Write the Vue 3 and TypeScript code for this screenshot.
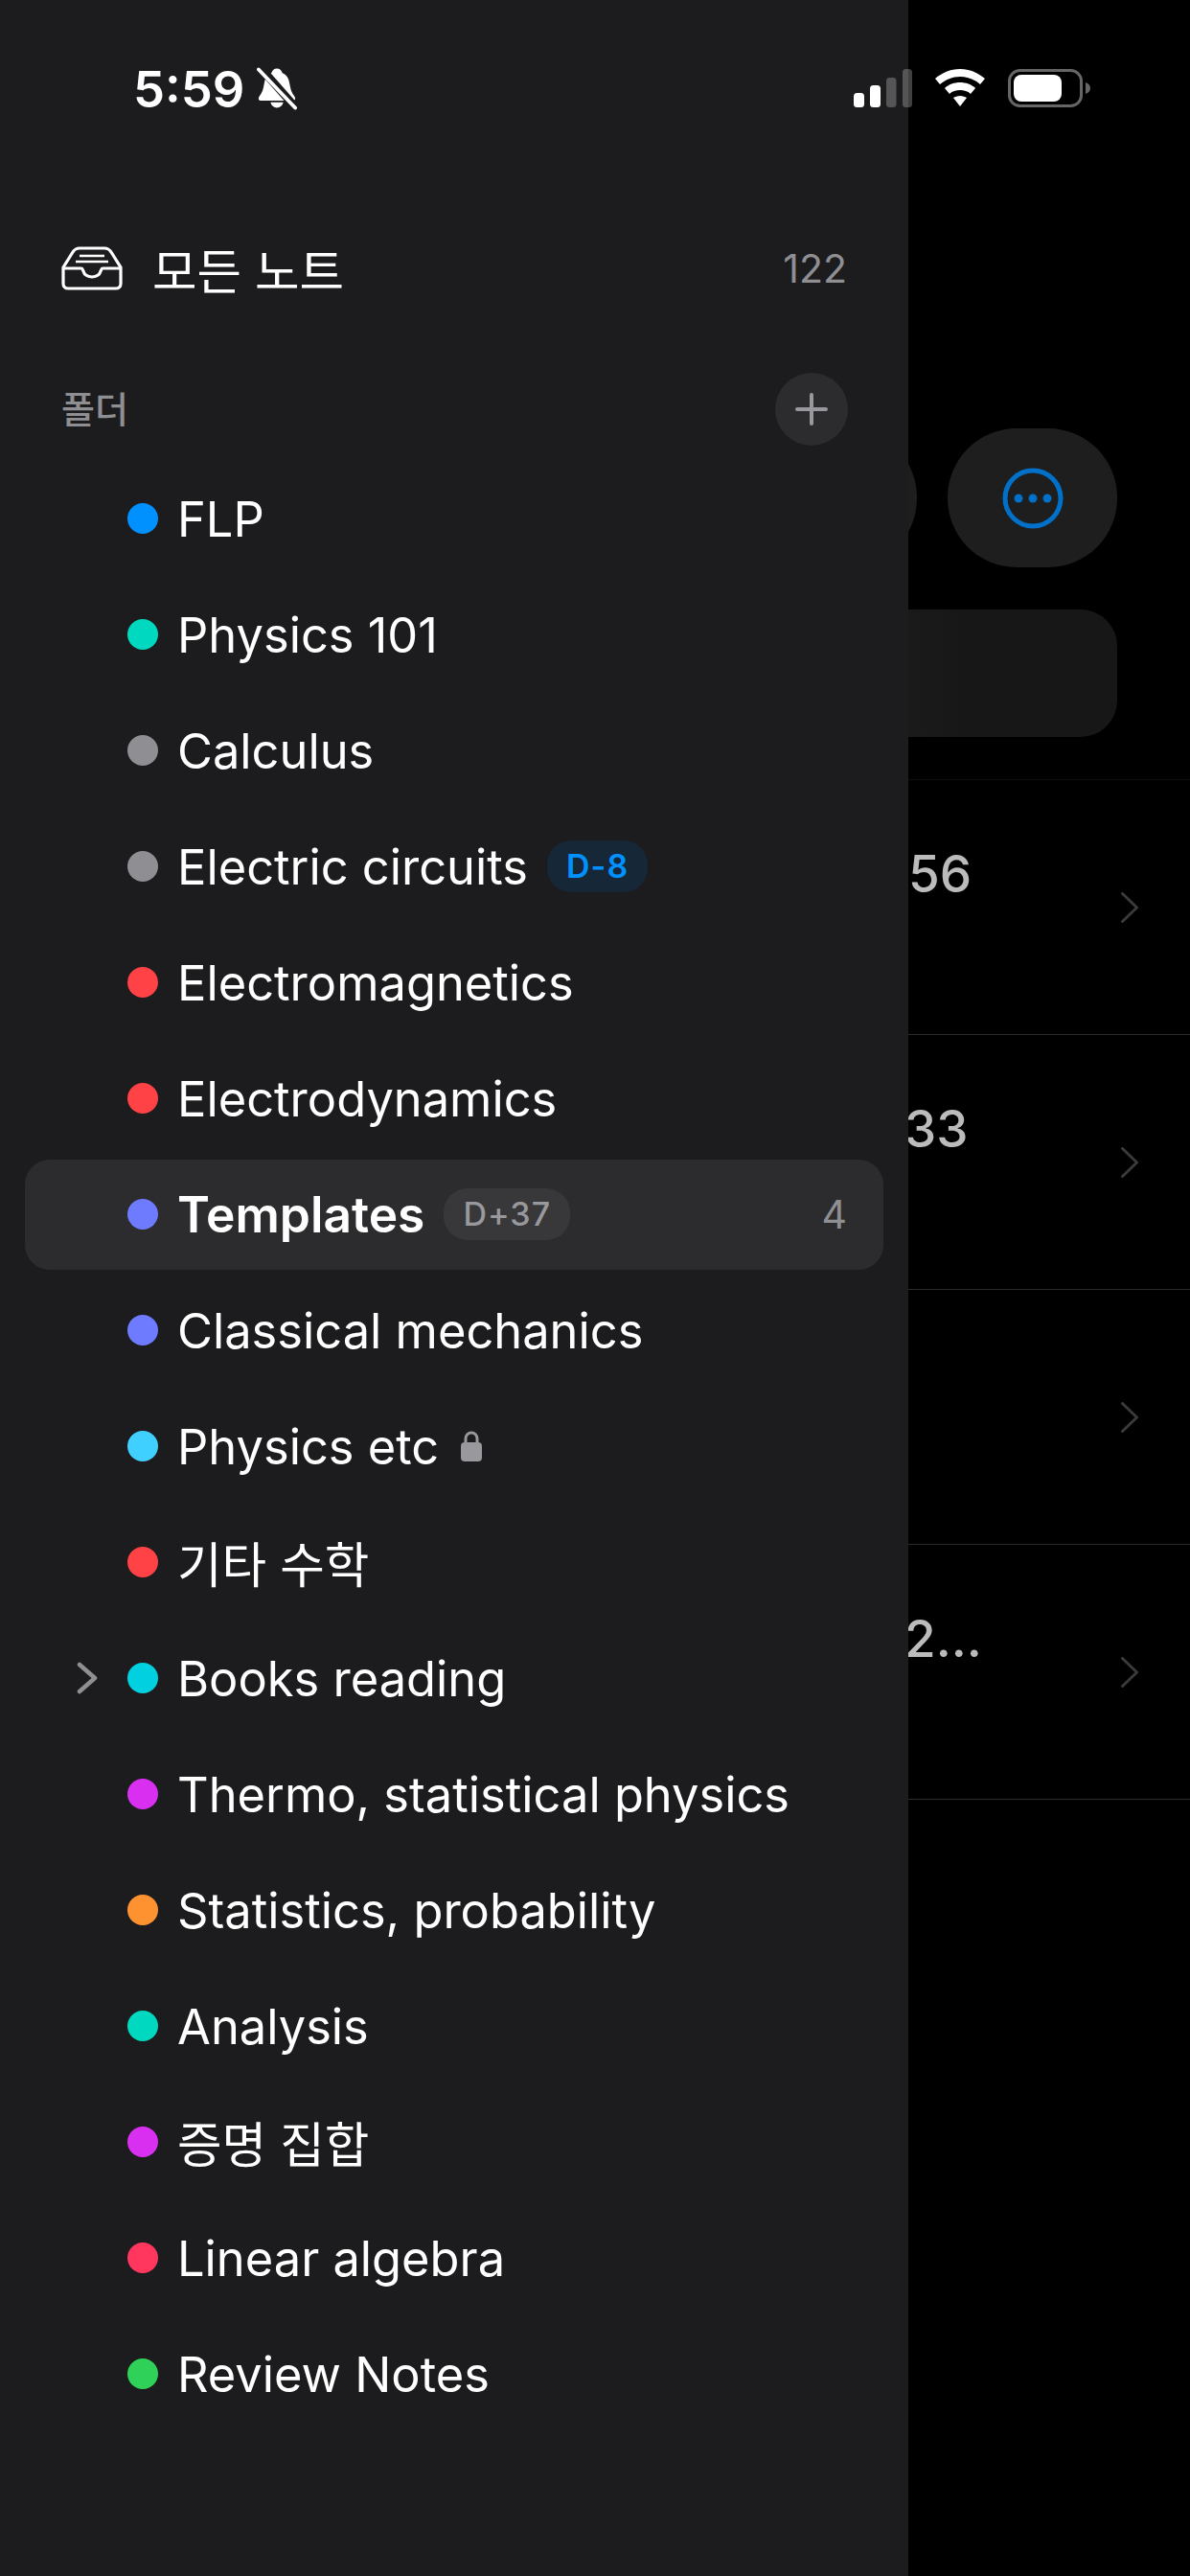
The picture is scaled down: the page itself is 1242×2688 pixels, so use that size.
<script setup lang="ts">
interface Folder {
  name: string
  color: string
  badge?: string
  badgeBlue?: boolean
  count?: number
  lock?: boolean
  expand?: boolean
  active?: boolean
}

const folders: Folder[] = [
  { name: 'FLP', color: '#0091ff' },
  { name: 'Physics 101', color: '#00d9c0' },
  { name: 'Calculus', color: '#8e8e93' },
  { name: 'Electric circuits', color: '#8e8e93', badge: 'D-8', badgeBlue: true },
  { name: 'Electromagnetics', color: '#ff4245' },
  { name: 'Electrodynamics', color: '#ff4245' },
  { name: 'Templates', color: '#6e7bff', badge: 'D+37', count: 4, active: true },
  { name: 'Classical mechanics', color: '#6e7bff' },
  { name: 'Physics etc', color: '#40d0ff', lock: true },
  { name: '기타 수학', color: '#ff4245' },
  { name: 'Books reading', color: '#00d0e0', expand: true },
  { name: 'Thermo, statistical physics', color: '#d92ff0' },
  { name: 'Statistics, probability', color: '#ff9230' },
  { name: 'Analysis', color: '#00d9c0' },
  { name: '증명 집합', color: '#d92ff0' },
  { name: 'Linear algebra', color: '#ff375f' },
  { name: 'Review Notes', color: '#30d158' },
]

// titles run under the drawer, so only their tail shows
const notes = [
  { title: '56', x: 0 },
  { title: '33', x: -4 },
  { title: '', x: 0 },
  { title: '2...', x: -4 },
]
</script>

<template>
  <div class="screen">
    <aside class="drawer">
      <div class="status-left">
        <span class="time">5:59</span>
        <svg class="bell" viewBox="0 0 44 46" width="42" height="45">
          <path d="M22 1c3 0 5 2 6 5 5 2 7 6 8 12 1 6 2 9 5 13 2 3 1 5-2 5H5c-3 0-4-2-2-5 3-4 4-7 5-13 1-6 3-10 8-12 1-3 3-5 6-5z" fill="#fff" />
          <path d="M15 38h14c-1 4-4 6-7 6s-6-2-7-6z" fill="#fff" />
          <path d="M3 -1 41 42" stroke="#1c1c1e" stroke-width="9" />
          <path d="M2 2 42 44" stroke="#fff" stroke-width="4" stroke-linecap="round" />
        </svg>
      </div>

      <div class="all-notes">
        <svg class="inbox" viewBox="0 0 64 46" width="64" height="46" fill="none" stroke="#fff">
          <path d="M2 22 12 6c2-3 4-4 7-4h26c3 0 5 1 7 4l10 16v17c0 3-2 5-5 5H7c-3 0-5-2-5-5z" stroke-width="3.2" />
          <path d="M2 23h19c1 0 1 1 2 3 1 4 5 6 9 6s8-2 9-6c1-2 1-3 2-3h19" stroke-width="3.2" />
          <path d="M19 10h26M15 16h34" stroke-width="2.6" />
        </svg>
        <span class="all-label">모든 노트</span>
        <span class="count">122</span>
      </div>

      <div class="section-head">
        <span class="section-label">폴더</span>
        <button class="add-btn">
          <svg viewBox="0 0 34 34" width="34" height="34">
            <path d="M17 2v30M2 17h30" stroke="#98989d" stroke-width="4" stroke-linecap="round" />
          </svg>
        </button>
      </div>

      <ul class="folders">
        <li v-for="f in folders" :key="f.name" class="folder" :class="{ active: f.active }">
          <span class="caret">
            <svg v-if="f.expand" viewBox="0 0 24 34" width="24" height="34" fill="none">
              <path d="M5 3 21 17 5 31" stroke="#8e8e93" stroke-width="4.5" stroke-linecap="round" stroke-linejoin="round" />
            </svg>
          </span>
          <span class="dot" :style="{ background: f.color }"></span>
          <span class="name">{{ f.name }}</span>
          <span v-if="f.badge" class="badge" :class="{ blue: f.badgeBlue }">{{ f.badge }}</span>
          <svg v-if="f.lock" class="lock" viewBox="0 0 24 34" width="24" height="34">
            <path d="M6 14V9a6 6 0 0 1 12 0v5" fill="none" stroke="#98989d" stroke-width="3" />
            <rect x="1" y="13" width="22" height="20" rx="4" fill="#98989d" />
          </svg>
          <span v-if="f.count" class="count">{{ f.count }}</span>
        </li>
      </ul>
    </aside>

    <main class="behind">
      <div class="actions">
        <button class="pill"></button>
        <button class="pill">
          <svg viewBox="0 0 64 64" width="64" height="64" fill="none">
            <circle cx="32" cy="32" r="29" stroke="#0070c9" stroke-width="5" />
            <circle cx="17" cy="32" r="4.5" fill="#0070c9" />
            <circle cx="32" cy="32" r="4.5" fill="#0070c9" />
            <circle cx="47" cy="32" r="4.5" fill="#0070c9" />
          </svg>
        </button>
      </div>

      <div class="search"></div>

      <ul class="notes">
        <li v-for="(n, i) in notes" :key="i" class="note">
          <span class="note-title" :style="{ left: n.x + 'px' }">{{ n.title }}</span>
          <svg class="chev" viewBox="0 0 18 32" width="18" height="32" fill="none">
            <path d="M1.5 1.5 16.5 16 1.5 30.5" stroke="#3a3a3c" stroke-width="3" stroke-linecap="round" stroke-linejoin="round" />
          </svg>
        </li>
      </ul>
    </main>

    <div class="status-right">
      <svg viewBox="0 0 61 40" width="61" height="40">
        <rect x="0" y="25" width="11" height="15" rx="3.5" fill="#fff" />
        <rect x="17" y="17" width="11" height="23" rx="3.5" fill="#fff" />
        <rect x="34" y="9" width="10.5" height="31" rx="3.5" fill="#fff" fill-opacity=".25" />
        <rect x="51" y="0" width="10" height="40" rx="3.5" fill="#fff" fill-opacity=".25" />
      </svg>
      <svg viewBox="1 0 52 40" width="52" height="40">
        <path d="M27 0c10 0 19 4 26 10l-5 6C42 11 35 8 27 8S12 11 6 16l-5-6C8 4 17 0 27 0z" fill="#fff" />
        <path d="M27 14c6 0 12 2 16 6l-5 6c-3-3-7-4-11-4s-8 1-11 4l-5-6c4-4 10-6 16-6z" fill="#fff" />
        <path d="M27 28c3 0 5 1 7 2l-7 9-7-9c2-1 4-2 7-2z" fill="#fff" />
      </svg>
      <svg viewBox="0 0 86 40" width="86" height="40">
        <rect x="1.5" y="1.5" width="75" height="37" rx="11" fill="none" stroke="#666" stroke-width="3" />
        <rect x="6" y="6" width="50" height="28" rx="8" fill="#fff" />
        <path d="M81 14c3 1 5 3 5 6s-2 5-5 6z" fill="#666" />
      </svg>
    </div>
  </div>
</template>

<style>
html,
body {
  margin: 0;
  background: #000;
}
</style>

<style scoped>
.screen {
  display: flex;
  position: relative;
  width: 1242px;
  height: 2688px;
  background: #000;
  overflow: hidden;
  font-family: Inter, "Noto Sans CJK KR", sans-serif;
  color: #fff;
}

.drawer {
  width: 948px;
  flex: none;
  background: #1c1c1e;
  box-sizing: border-box;
  position: relative;
  z-index: 1;
}

.status-left {
  height: 92px;
  padding: 68px 0 0 139px;
  display: flex;
  align-items: flex-start;
  gap: 13px;
}

.time {
  font-size: 52.5px;
  line-height: 50px;
  font-weight: 600;
}

.bell {
  margin-top: 2px;
}

.status-right {
  position: absolute;
  z-index: 2;
  top: 72px;
  left: 891px;
  display: flex;
  gap: 24px;
}

.all-notes {
  display: flex;
  align-items: center;
  height: 120px;
  margin-top: 60px;
  padding: 0 64px;
}

.inbox {
  margin-right: 31px;
}

.all-label {
  font-size: 50.5px;
  font-weight: 400;
}

.count {
  margin-left: auto;
  font-size: 41px;
  color: #8e8e93;
}

.section-head {
  display: flex;
  align-items: center;
  justify-content: space-between;
  padding: 0 63px 0 64px;
  height: 78px;
  margin-top: 48px;
}

.section-label {
  font-size: 38px;
  font-weight: 500;
  color: #8e8e93;
  margin-bottom: 5px;
}

.add-btn {
  width: 76px;
  height: 76px;
  border: 0;
  padding: 0;
  border-radius: 50%;
  background: #2c2c2e;
  display: flex;
  align-items: center;
  justify-content: center;
}

.folders {
  list-style: none;
  margin: 17.5px 0 0;
  padding: 0 26px;
  display: flex;
  flex-direction: column;
  gap: 6px;
}

.folder {
  height: 115px;
  display: flex;
  align-items: center;
  padding: 0 38px 0 52px;
  border-radius: 26px;
}

.folder.active {
  background: #2c2c2e;
}

.caret {
  width: 55px;
  display: flex;
  flex: none;
}

.dot {
  width: 32px;
  height: 32px;
  border-radius: 50%;
  flex: none;
  margin-right: 20px;
}

.name {
  font-size: 50.6px;
  font-weight: 400;
  white-space: nowrap;
}

.active .name {
  font-size: 51.5px;
  font-weight: 600;
}

.badge {
  margin-left: 20px;
  height: 54px;
  line-height: 54px;
  padding: 0 20px;
  border-radius: 25px;
  background: #38383a;
  color: #98989d;
  font-size: 34px;
  letter-spacing: 1px;
  font-weight: 500;
}

.badge.blue {
  background: #162738;
  color: #0091ff;
  font-weight: 600;
}

.lock {
  margin-left: 22px;
}

.behind {
  flex: 1;
  min-width: 0;
  position: relative;
}

.actions {
  margin-top: 447px;
  height: 145px;
  display: flex;
  justify-content: flex-end;
  gap: 32px;
  padding-right: 76px;
}

.pill {
  width: 177px;
  height: 145px;
  border: 0;
  padding: 0;
  border-radius: 72px;
  background: #1e1e1e;
  display: flex;
  align-items: center;
  justify-content: center;
  flex: none;
}

.search {
  height: 133px;
  margin-top: 44px;
  margin-right: 76px;
  border-radius: 0 38px 38px 0;
  background: linear-gradient(90deg, #1a1a1a, #171717 60px);
}

.notes {
  list-style: none;
  margin: 44px 0 0;
  padding: 0;
  border-top: 1px solid #0d0d0d;
}

.note {
  height: 265px;
  border-bottom: 1px solid #2a2a2c;
  position: relative;
}

.note-title {
  position: absolute;
  top: 66px;
  font-size: 53px;
  font-weight: 500;
  color: #bbb;
  white-space: nowrap;
}

.chev {
  position: absolute;
  right: 54px;
  top: 117px;
}
</style>
